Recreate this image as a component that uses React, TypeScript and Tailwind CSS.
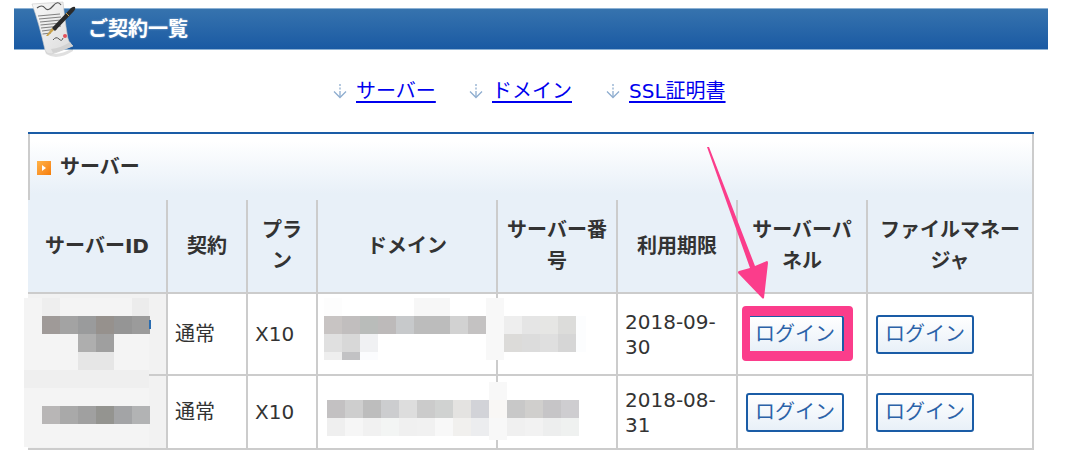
const FONT = { fontFamily: '"DejaVu Sans", "Noto Sans CJK JP", sans-serif' };

type Block = [number, number, number, number, string];

function row(xs: number, y: number, h: number, colors: string[]): Block[] {
  return colors.map((c, i) => [xs + i * 18, y, 18, h, c] as Block);
}

// mosaic blocks that hide the account data
const MOSAIC: Block[] = [
  [24, 298, 125, 149, "#f4f4f4"],
  [42, 298, 18, 18, "#eeeeee"],
  [132, 298, 17, 18, "#ececec"],
  ...row(42, 316, 18, ["#9f9a98", "#a3a3a3", "#9a9b9c", "#96918d", "#959595", "#9b9b9b"]),
  ...row(78, 334, 18, ["#aeaeae", "#9f9f9f"]),
  ...row(78, 352, 18, ["#e6e6e6", "#e6e6e6"]),
  [24, 370, 125, 18, "#efefef"],
  ...row(42, 406, 18, ["#b8b6b6", "#a9a9a9", "#a0a0a0", "#949490", "#a3a4a6", "#b2b3b4"]),
  [149, 320, 2, 9, "#2a6cb0"],
  // domain, row 1
  [324, 298, 18, 18, "#fdfdfd"],
  [414, 298, 36, 18, "#f7f7f7"],
  ...row(324, 316, 18, ["#c8c4c3", "#c1bebe", "#b9bcba", "#bdbaba", "#c7c9cb", "#bcbcbc", "#bcbcbc", "#d2d2d2", "#c4c2c2"]),
  ...row(324, 334, 18, ["#e0e0e0", "#d8d8d8", "#f0f1f3"]),
  ...row(324, 352, 8, ["#eeeeee", "#c2c2c4", "#fbfcfe"]),
  [486, 298, 18, 62, "#f8f8f8"],
  ...row(504, 316, 18, ["#eeeeee", "#e5e5e5", "#e6e6e4", "#dcdcda"]),
  [576, 316, 10, 36, "#fcfdfe"],
  ...row(504, 334, 18, ["#dcdbd9", "#dcdcdc", "#dfdfdf", "#d6d6d6"]),
  // domain, row 2
  [489, 382, 18, 58, "#f8f8f8"],
  ...row(327, 400, 18, ["#c3c1c2", "#cecece", "#bdbdbd", "#cccdcf", "#dddddd", "#cbcbcb", "#d0d2d1", "#e4e3e1", "#d2d3d8", "#f9f7f5", "#c8c8c8", "#d0cfcd", "#c6c5c7", "#cecdd0"]),
  ...row(327, 418, 18, ["#efefef", "#f6f6f6", "#f1f1f1", "#f3f5f4", "#f0f0f0", "#f1f1f1", "#f8f8f8", "#f1f0ee", "#ecedef", "#f8f8f8", "#f0f0f0", "#f2f2f2", "#edeeee", "#eff1f0"]),
];

function ContractIcon() {
  return (
    <svg className="absolute left-[15px] top-[-8px]" width="52" height="60" viewBox="0 0 52 60">
      <defs>
        <linearGradient id="paper" x1="0" y1="0" x2="1" y2="1">
          <stop offset="0" stopColor="#f8f8f8" />
          <stop offset="1" stopColor="#dcdcdc" />
        </linearGradient>
      </defs>
      <path d="M16 50 Q26 57 44 47 L44 50 Q28 60 17 53 Z" fill="#000" opacity="0.12" />
      <path d="M3 3 L34 1 Q36 20 38 32 Q39 42 44 45 L26 52 Q18 55 16 49 Q10 22 3 3 Z" fill="url(#paper)" stroke="#c8c8c8" strokeWidth="0.6" />
      <path d="M24 52 Q33 50 44 45 L41 41 Q32 47 22 48 Z" fill="#d2d2d2" />
      <path d="M8 7 Q13 3 16 7 T24 5 T32 4" fill="none" stroke="#555" strokeWidth="1.200" />
      <path d="M9 15 L31 13 M10 18 L32 16 M11 21 L32 19 M11.500 24 L32 22 M12 27 L32 25 M13 30 L28 28 M13.500 33 L22 32" stroke="#808080" strokeWidth="1.100" />
      <path d="M24 39 Q27 35 30 38 T34 37" fill="none" stroke="#555" strokeWidth="1" />
      <circle cx="36" cy="35" r="2" fill="#e2525c" />
      <path d="M17 35 L23 27 L25 29 L19 35 Z" fill="#c9a24a" />
      <path d="M23 27 L42 7 Q45 5 46 6 Q47 8 45 10 L26 30 Z" fill="#2a2a2a" />
      <path d="M37 12 L40 15" stroke="#c9a24a" strokeWidth="1" />
    </svg>
  );
}

function DownArrow() {
  return (
    <svg width="14" height="16" viewBox="0 0 14 16" fill="none" stroke="#8eadcf" strokeWidth="1.300">
      <path d="M7 1 V3 M7 4.500 V6.500 M7 8 V14" />
      <path d="M1 8.500 L7 14.500 L13 8.500" />
    </svg>
  );
}

function JumpLink({ label, className }: { label: string; className: string }) {
  return (
    <div className={`flex items-center ${className}`}>
      <DownArrow />
      <a href="#" className="ml-[9px] text-[20px] leading-[24px] text-[#0000ee] underline decoration-2 underline-offset-[3px]">
        {label}
      </a>
    </div>
  );
}

function LoginButton() {
  return (
    <button className="h-[39px] w-[98px] rounded-[3px] border-2 border-[#1a5ca6] bg-gradient-to-b from-white to-[#e8f0f8] text-[20px] leading-none text-[#2b62a8]">
      ログイン
    </button>
  );
}

const thClass = "border-r-2 border-b-2 border-[#cccccc] bg-[#e8f0f8] text-center align-middle text-[20px] font-bold leading-[31px] text-[#333333]";
const tdClass = "border-r-2 border-b-2 border-[#cccccc] pl-[7px] pr-[4px] align-middle text-[20px] leading-[25px] text-[#333333]";

export default function App() {
  return (
    <div className="relative h-[470px] w-[1070px] overflow-hidden bg-white" style={FONT}>
      <div className="relative ml-[14px] mt-[8px] flex h-[42px] w-[1034px] items-center border-y border-[#8db1d3] bg-gradient-to-b from-[#3673ae] to-[#1a5aa3] pl-[74px]">
        <ContractIcon />
        <h1 className="text-[20px] font-bold leading-[24px] text-white [text-shadow:0_0_2px_#ffffff80]">ご契約一覧</h1>
      </div>

      <div className="mt-[28px] flex h-[26px] items-center pl-[333px]">
        <JumpLink label="サーバー" className="w-[136px]" />
        <JumpLink label="ドメイン" className="w-[136px]" />
        <JumpLink label="SSL証明書" className="pl-[1px]" />
      </div>

      <table className="ml-[28px] mt-[28px] w-[1006px] table-fixed border-separate border-spacing-0 border-t-2 border-[#1a5ca6]">
        <colgroup>
          <col className="w-[140px]" />
          <col className="w-[80px]" />
          <col className="w-[70px]" />
          <col className="w-[180px]" />
          <col className="w-[120px]" />
          <col className="w-[120px]" />
          <col className="w-[130px]" />
          <col className="w-[166px]" />
        </colgroup>
        <thead>
          <tr className="h-[66px]">
            <th colSpan={8} className="border-x-2 border-[#cccccc] bg-gradient-to-b from-white from-10% to-[#e8f0f8] to-90% pl-[7px] text-left">
              <div className="flex items-center gap-[9px] text-[20px] font-bold leading-[24px] text-[#333333]">
                <span className="mt-[2px] flex h-[14px] w-[14px] items-center justify-center bg-gradient-to-br from-[#ffb347] to-[#f57c00]">
                  <span className="h-0 w-0 border-y-[3px] border-l-[4px] border-y-transparent border-l-white" />
                </span>
                サーバー
              </div>
            </th>
          </tr>
          <tr className="h-[94px]">
            <th className={thClass}>サーバーID</th>
            <th className={thClass}>契約</th>
            <th className={thClass}>プラ<br />ン</th>
            <th className={thClass}>ドメイン</th>
            <th className={thClass}>サーバー番<br />号</th>
            <th className={thClass}>利用期限</th>
            <th className={thClass}>サーバーパ<br />ネル</th>
            <th className={thClass}>ファイルマネー<br />ジャ</th>
          </tr>
        </thead>
        <tbody>
          <tr className="h-[82px]">
            <td className={`${tdClass} bg-[#f2f2f2]`}></td>
            <td className={tdClass}>通常</td>
            <td className={tdClass}>X10</td>
            <td className={tdClass}></td>
            <td className={tdClass}></td>
            <td className={`${tdClass} pt-[2px]`}>2018-09-<br />30</td>
            <td className={`${tdClass} !pl-[8px]`}><LoginButton /></td>
            <td className={`${tdClass} !pl-[8px]`}><LoginButton /></td>
          </tr>
          <tr className="h-[74px]">
            <td className={`${tdClass} bg-[#f2f2f2]`}></td>
            <td className={tdClass}>通常</td>
            <td className={tdClass}>X10</td>
            <td className={tdClass}></td>
            <td className={tdClass}></td>
            <td className={`${tdClass} pt-[2px]`}>2018-08-<br />31</td>
            <td className={`${tdClass} !pl-[8px]`}><LoginButton /></td>
            <td className={`${tdClass} !pl-[8px]`}><LoginButton /></td>
          </tr>
        </tbody>
      </table>

      {/* mosaics and the pink annotation lie over the table */}
      <svg className="pointer-events-none absolute left-0 top-0" width="1070" height="470" viewBox="0 0 1070 470" shapeRendering="crispEdges">
        {MOSAIC.map(([x, y, w, h, c], i) => (
          <rect key={i} x={x} y={y} width={w} height={h} fill={c} />
        ))}
      </svg>
      <svg className="pointer-events-none absolute left-0 top-0" width="1070" height="470" viewBox="0 0 1070 470">
        <path d="M707 147 L709 147 L755 266 L767 261 Q768 261 768 263 L764 298 Q763 299 762 298 L738 273 Q738 271 739 271 L750 268 Z" fill="#fb3d8b" />
      </svg>
      <div className="pointer-events-none absolute left-[742px] top-[306px] h-[55px] w-[111px] rounded-[4px] border-x-8 border-y-[10px] border-r-[9px] border-[#fb3d8b]" />
    </div>
  );
}
